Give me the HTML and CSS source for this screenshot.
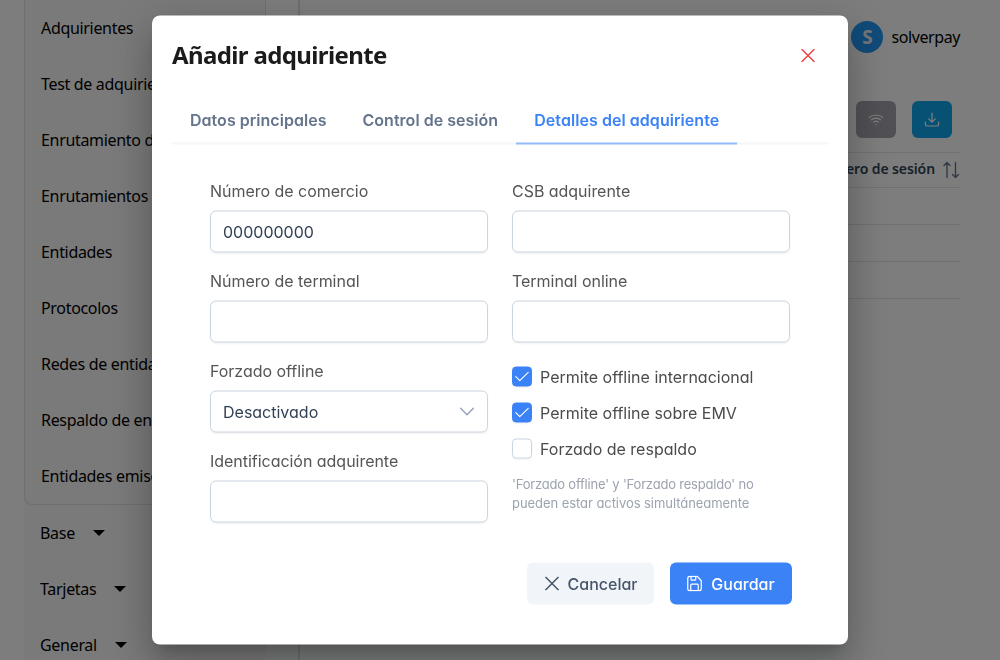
FILE: index.html
```html
<!DOCTYPE html>
<html lang="es">
<head>
<meta charset="utf-8">
<title>Añadir adquiriente</title>
<link rel="stylesheet" href="styles.css">
</head>
<body>
<div class="page">
  <aside class="sidebar">
    <ul class="submenu">
      <li>Adquirientes</li>
      <li>Test de adquirientes</li>
      <li>Enrutamiento de tarjetas</li>
      <li>Enrutamientos</li>
      <li>Entidades</li>
      <li>Protocolos</li>
      <li>Redes de entidades</li>
      <li>Respaldo de entidades</li>
      <li>Entidades emisoras</li>
    </ul>
    <ul class="groups">
      <li>Base <i class="caret"></i></li>
      <li>Tarjetas <i class="caret"></i></li>
      <li>General <i class="caret"></i></li>
    </ul>
  </aside>
  <main class="main">
    <div class="user"><span class="avatar">S</span><span class="username">solverpay</span></div>
    <div class="tools">
      <span class="tool tool-gray"><svg width="16" height="16" viewBox="0 0 16 16" fill="none" stroke="currentColor" stroke-width="1.200" stroke-linecap="round"><path d="M1.400 5.400C5 2.200 11 2.200 14.600 5.400M3.400 7.800C6 5.600 10 5.600 12.600 7.800M5.600 10.100C7 9 9 9 10.400 10.100"/><circle cx="8" cy="12.500" r=".7" fill="currentColor" stroke="none"/></svg></span>
      <span class="tool tool-blue"><svg width="16" height="16" viewBox="0 0 16 16" fill="none" stroke="currentColor" stroke-width="1.200" stroke-linecap="round" stroke-linejoin="round"><path d="M8 1V10M4.700 6.900L8 10.200L11.300 6.900M1.400 10V12.500Q1.400 14 2.900 14H13.100Q14.600 14 14.600 12.500V10"/></svg></span>
    </div>
    <div class="table">
      <div class="thead"><span class="th">Número de sesión</span><svg width="18" height="18" viewBox="0 0 18 18" fill="none" stroke="currentColor" stroke-width="1.400" stroke-linecap="round" stroke-linejoin="round"><path d="M5 16.500V1.500M2 4.500L5 1.500L8 4.500M13.500 1.500V16.500M10.500 13.500L13.500 16.500L16.500 13.500"/></svg></div>
      <div class="row"></div><div class="row"></div><div class="row"></div>
    </div>
  </main>
</div>
<div class="mask">
  <section class="dialog">
    <header class="dialog-head">
      <h1>Añadir adquiriente</h1>
      <svg class="close" width="14" height="14" viewBox="0 0 14 14" fill="none" stroke="currentColor" stroke-width="1.500" stroke-linecap="round"><path d="M1 1L13 13M13 1L1 13"/></svg>
    </header>
    <nav class="tabs">
      <a class="tab">Datos principales</a>
      <a class="tab">Control de sesión</a>
      <a class="tab active">Detalles del adquiriente</a>
    </nav>
    <div class="form">
      <div class="col">
        <div class="field"><label>Número de comercio</label><div class="input">000000000</div></div>
        <div class="field"><label>Número de terminal</label><div class="input"></div></div>
        <div class="field"><label>Forzado offline</label><div class="input select">Desactivado<svg width="14" height="14" viewBox="0 0 14 14" fill="none" stroke="currentColor" stroke-width="1.400" stroke-linecap="round" stroke-linejoin="round"><path d="M.6 3.800L7 10.200L13.400 3.800"/></svg></div></div>
        <div class="field"><label>Identificación adquirente</label><div class="input"></div></div>
      </div>
      <div class="col">
        <div class="field"><label>CSB adquirente</label><div class="input"></div></div>
        <div class="field"><label>Terminal online</label><div class="input"></div></div>
        <div class="checks">
          <div class="check"><span class="box on"><svg width="14" height="14" viewBox="0 0 14 14" fill="none" stroke="currentColor" stroke-width="1.100" stroke-linecap="round" stroke-linejoin="round"><path d="M.8 7.200L4.800 11.200L13.200 2.800"/></svg></span>Permite offline internacional</div>
          <div class="check"><span class="box on"><svg width="14" height="14" viewBox="0 0 14 14" fill="none" stroke="currentColor" stroke-width="1.100" stroke-linecap="round" stroke-linejoin="round"><path d="M.8 7.200L4.800 11.200L13.200 2.800"/></svg></span>Permite offline sobre EMV</div>
          <div class="check"><span class="box"></span>Forzado de respaldo</div>
        </div>
        <p class="hint"><span class="hint-tight">'Forzado offline' y 'Forzado respaldo' no</span><br>pueden estar activos simultáneamente</p>
      </div>
    </div>
    <footer class="actions">
      <span class="btn cancel"><svg width="14" height="14" viewBox="0 0 14 14" fill="none" stroke="currentColor" stroke-width="1.500" stroke-linecap="round"><path d="M.8 .8L13.200 13.200M13.200 .8L.8 13.200"/></svg>Cancelar</span>
      <span class="btn save"><svg width="15" height="16" viewBox="0 0 16 16" preserveAspectRatio="none" fill="none" stroke="currentColor" stroke-width="1.300" stroke-linejoin="round"><path d="M3 .8H10.800L15.200 5.200V13Q15.200 15.200 13 15.200H3Q.8 15.200 .8 13V3Q.8 .8 3 .8ZM4 15V9.500Q4 8.600 4.900 8.600H11.100Q12 8.600 12 9.500V15M4.300 1V3.900Q4.300 4.600 5 4.600H8.600Q9.300 4.600 9.300 3.900V1"/></svg>Guardar</span>
    </footer>
  </section>
</div>
</body>
</html>
```
FILE: styles.css
```css
* { box-sizing: border-box; }
body { margin: 0; overflow: hidden; }
.page { display: flex; height: 660px; overflow: hidden; background: #f8fbf9; font: 16px/24px "Noto Sans", sans-serif; color: #000; }
.sidebar { width: 300px; flex: none; border-right: 2px solid #dcdfde; padding-left: 24px; background: linear-gradient(#f4f4f4, #f4f4f4) 24px 0 / 242px 100% no-repeat; }
.submenu, .groups { list-style: none; margin: 0; width: 242px; padding: 0 16px; }
.submenu { height: 505px; border: 1px solid #dedee0; border-top: 0; border-radius: 0 0 8px 8px; letter-spacing: -.32px; white-space: nowrap; }
.submenu li { height: 56px; line-height: 56px; }
.groups { height: 168px; letter-spacing: -.3px; }
.groups li { display: flex; align-items: center; gap: 18px; height: 56px; }
.caret { border: 6px solid transparent; border-top-color: #000; border-bottom: 0; }
.main { flex: 1; padding: 21px 40px 0 24px; }
.user { display: flex; justify-content: flex-end; align-items: center; gap: 8px; height: 32px; letter-spacing: -.4px; }
.avatar { display: grid; place-items: center; width: 32px; height: 32px; border-radius: 50%; background: #2196f3; color: #e8ecf2; font-weight: 700; font-size: 19px; letter-spacing: 0; }
.tools { display: flex; justify-content: flex-end; gap: 16px; margin: 48px 8px 14px 0; }
.tool { display: grid; place-items: center; width: 40px; height: 37px; border-radius: 6px; color: #fff; }
.tool-gray { background: #a1a1aa; }
.tool-blue { background: #0ea5e9; }
.table { border-top: 1px solid #e2e2ec; }
.thead { display: flex; align-items: center; justify-content: flex-end; gap: 7px; height: 35px; border-bottom: 1px solid #dfe0e8; color: #334155; font-size: 14px; font-weight: 600; letter-spacing: -.1px; }
.th { padding-bottom: 2px; }
.thead svg { color: #64748b; }
.row { height: 37px; border-bottom: 1px solid #dfdfec; }
.mask { position: fixed; inset: 0; display: flex; justify-content: center; align-items: flex-start; padding-top: 15px; background: rgba(0, 0, 0, .5); }
.dialog { width: 696px; height: 629px; padding: 0 20px; transform: translate(0, .5px); border-radius: 8px; background: #fff; color: #555; font: 16px/24px Inter, sans-serif; font-feature-settings: "cv02", "cv03", "cv04", "cv11"; box-shadow: 0 11px 15px -7px rgba(0, 0, 0, .2), 0 24px 38px 3px rgba(0, 0, 0, .14), 0 9px 46px 8px rgba(0, 0, 0, .12); }
.dialog-head { display: flex; justify-content: space-between; align-items: center; height: 80px; padding-right: 13px; }
h1 { margin: 0; padding-bottom: 2px; color: #1b1b1b; font: 700 24px/32px "Noto Sans", sans-serif; letter-spacing: -.63px; }
.close { color: #ef4444; }
.tabs { display: flex; height: 49px; border-bottom: 2px solid #f5f6f8; }
.tab { height: 49px; padding: 12px 18px; border-bottom: 2px solid transparent; color: #64748b; font-weight: 600; letter-spacing: .03px; white-space: nowrap; }
.tab.active { color: #3b82f6; border-color: #93bbfc; letter-spacing: .06px; }
.form { display: grid; grid-template-columns: 278px 278px; gap: 24px; padding: 34px 38px 0; }
.field { height: 90px; }
.field label { display: block; height: 32px; letter-spacing: -.03px; }
.input { display: flex; align-items: center; justify-content: space-between; height: 42px; padding: 0 12px; border: 1px solid #cbd5e1; border-radius: 6px; background: #fff; color: #334155; box-shadow: 0 1px 2px rgba(18, 18, 23, .05); }
.select svg { color: #94a3b8; margin-right: 1px; }
.checks { display: grid; gap: 12px; padding-top: 6px; }
.check { display: flex; align-items: center; gap: 8px; height: 24px; color: #4b4b4b; }
.box { display: grid; place-items: center; width: 20px; height: 20px; border: 1px solid #cbd5e1; border-radius: 4px; color: #fff; box-shadow: 0 1px 2px rgba(18, 18, 23, .05); }
.box.on { border-color: #3b82f6; background: #3b82f6; }
.hint { height: 38px; margin: 14px 0 -1px; color: #9ca3af; font-size: 13px; line-height: 19px; letter-spacing: -.06px; }
.hint-tight { letter-spacing: -.2px; }
.actions { display: flex; justify-content: flex-end; gap: 16px; padding: 24px 36px 0 0; }
.btn { display: flex; align-items: center; justify-content: center; gap: 9px; height: 42px; border-radius: 6px; font-weight: 500; }
.cancel { width: 127px; padding-left: 1px; background: #f1f5f9; color: #475569; }
.save { width: 122px; background: #3b82f6; color: #fff; }
```
